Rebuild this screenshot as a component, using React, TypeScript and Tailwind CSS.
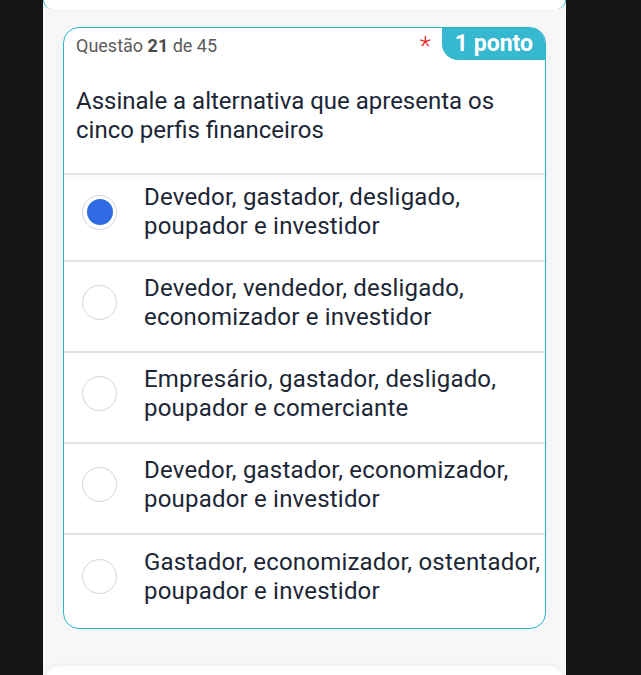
const options = [
  ['Devedor, gastador, desligado,', 'poupador e investidor'],
  ['Devedor, vendedor, desligado,', 'economizador e investidor'],
  ['Empresário, gastador, desligado,', 'poupador e comerciante'],
  ['Devedor, gastador, economizador,', 'poupador e investidor'],
  ['Gastador, economizador, ostentador,', 'poupador e investidor'],
]

function Radio({ checked }: { checked: boolean }) {
  return (
    <div className="flex size-[35px] shrink-0 items-center justify-center rounded-full border-[1.5px] border-[#d4d4d4] bg-white">
      {checked ? <div className="size-[26px] rounded-full bg-[#2f6be3]" /> : null}
    </div>
  )
}

export default function App() {
  return (
    <div
      className="flex h-[675px] w-[641px] justify-center overflow-hidden bg-[#141414] pr-[75px] pl-[43px]"
      style={{ fontFamily: 'Roboto, "Noto Sans", sans-serif' }}
    >
      <div className="flex w-[523px] shrink-0 flex-col bg-[#f7f7f7]">
        <div className="h-[9px] shrink-0 rounded-b-[14px] border-x border-[#2bb5c9] bg-white" />

        <div className="mx-[20px] mt-[18px] shrink-0 overflow-hidden rounded-[16px] border-[1.5px] border-[#2bb5c9] bg-white">
          <div className="flex items-start justify-between">
            <p className="pt-[4px] pl-[12px] text-[18px] text-[#5b5b5b]">
              Questão <span className="font-bold text-[#4a4a4a]">21</span> de 45
            </p>
            <div className="flex items-start">
              <span className="mt-[5px] mr-[11px] text-[26px] leading-none font-light text-[#e8231c]">*</span>
              <div className="flex h-[32px] items-center rounded-bl-[16px] bg-[#36b8d0] pr-[12px] pl-[13px] text-[23px] font-bold text-white">
                1 ponto
              </div>
            </div>
          </div>

          <p className="px-[12px] pt-[27px] pb-[28px] text-[24px] leading-[29px] text-[#1c2636]">
            Assinale a alternativa que apresenta os
            <br />
            cinco perfis financeiros
          </p>

          <div className="h-[2px] bg-[#e6e6e6] shadow-[0_3px_5px_rgba(0,0,0,0.06)]" />

          {options.map((opt, i) => (
            <div
              key={i}
              className={`flex items-center gap-[27px] pl-[18px] ${
                i === 0 ? 'h-[87px] pb-[11px]' : i < options.length - 1 ? 'h-[91px] pb-[8px]' : 'h-[93px] pb-[10px]'
              } ${i < options.length - 1 ? 'border-b-2 border-[#e3e3e3]' : ''}`}
            >
              <Radio checked={i === 0} />
              <p className="text-[24px] leading-[29px] tracking-[0.2px] text-[#1c2636]">
                {opt[0]}
                <br />
                {opt[1]}
              </p>
            </div>
          ))}
        </div>

        <div className="mx-[3px] mt-[37px] h-[40px] shrink-0 rounded-t-[14px] bg-white shadow-[0_-1px_4px_rgba(0,0,0,0.05)]" />
      </div>
    </div>
  )
}
